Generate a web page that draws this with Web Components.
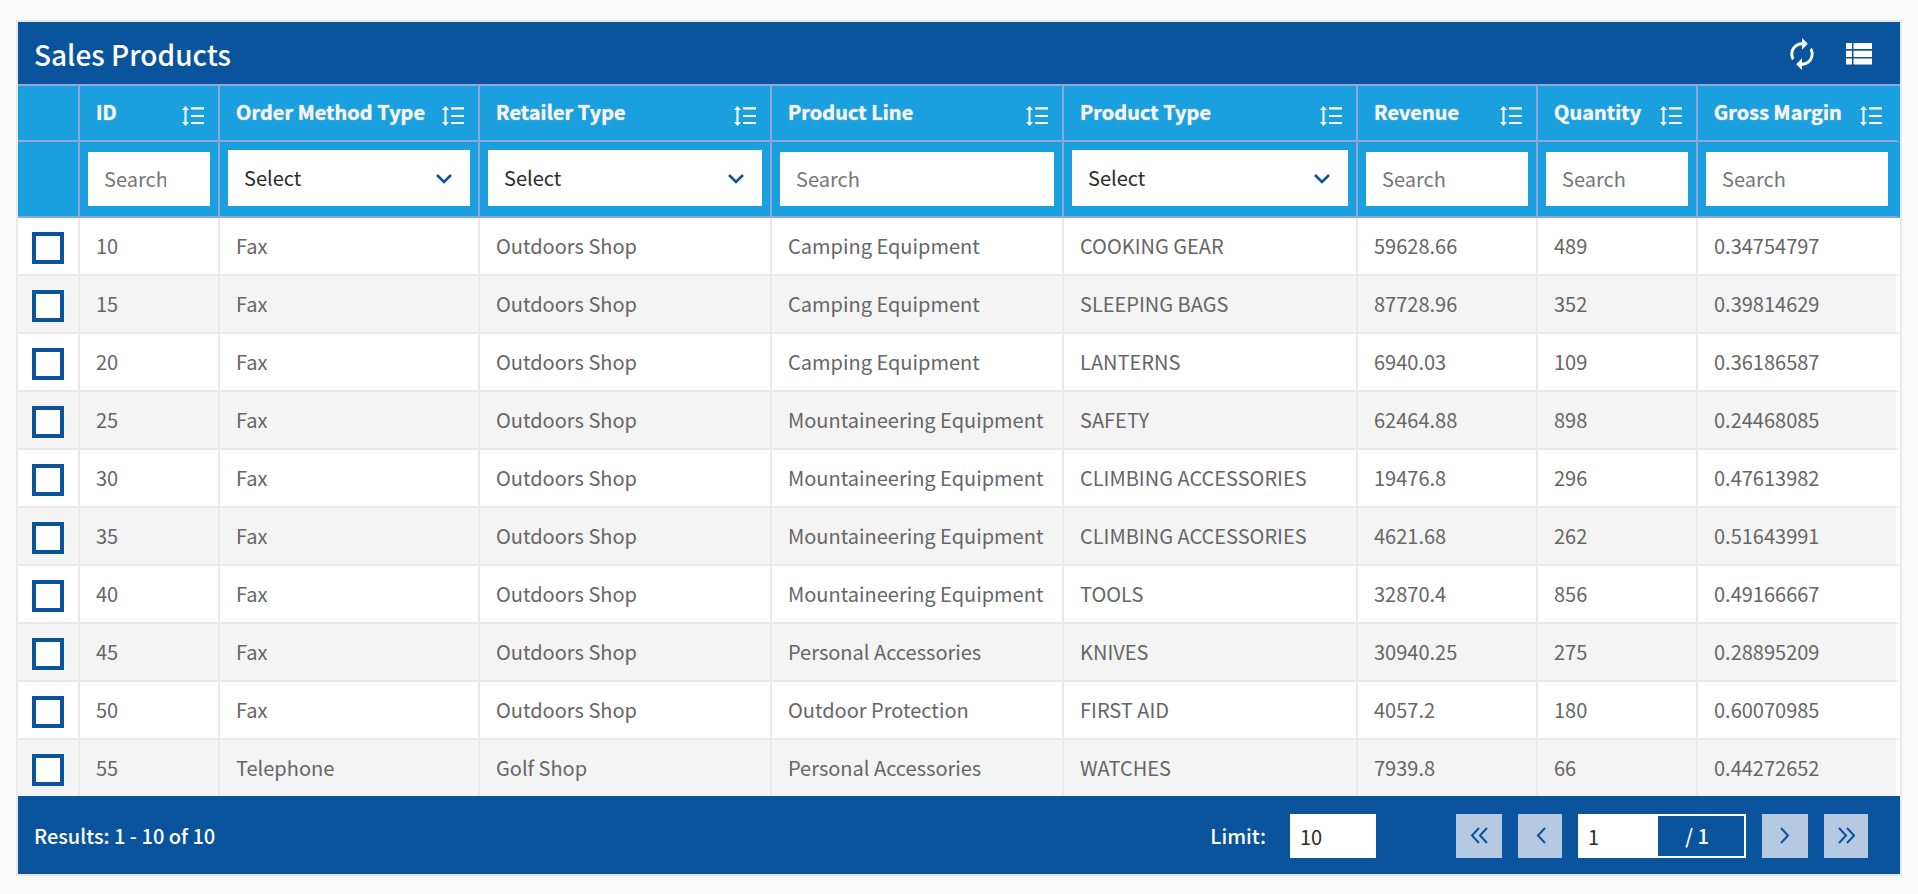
<!DOCTYPE html>
<html lang="en">
<head>
<meta charset="utf-8">
<meta name="viewport" content="width=device-width, initial-scale=1">
<title>Sales Products</title>
<style>
  :root {
    --brand: #0a549e;
    --accent: #1ba0df;
    --head-line: #8ea6dc;
    --line: #e9e9e9;
    --stripe: #f4f4f4;
    --text: #666;
    --ink: #2b2b2b;
  }
  body {
    margin: 0;
    padding: 20px 16px 18px;
    background: #fafafa;
    color: var(--text);
    font: 20px/32px "Noto Sans CJK SC", "Noto Sans", sans-serif;
  }
</style>
</head>
<body>
<data-grid heading="Sales Products"></data-grid>

<script>
const COLUMNS = [
  { label: 'ID', width: 140, filter: 'search' },
  { label: 'Order Method Type', width: 260, filter: 'select' },
  { label: 'Retailer Type', width: 292, filter: 'select' },
  { label: 'Product Line', width: 292, filter: 'search' },
  { label: 'Product Type', width: 294, filter: 'select' },
  { label: 'Revenue', width: 180, filter: 'search' },
  { label: 'Quantity', width: 160, filter: 'search' },
  { label: 'Gross Margin', width: 202, filter: 'search' }
];
const ROWS = [
  ['10', 'Fax', 'Outdoors Shop', 'Camping Equipment', 'COOKING GEAR', '59628.66', '489', '0.34754797'],
  ['15', 'Fax', 'Outdoors Shop', 'Camping Equipment', 'SLEEPING BAGS', '87728.96', '352', '0.39814629'],
  ['20', 'Fax', 'Outdoors Shop', 'Camping Equipment', 'LANTERNS', '6940.03', '109', '0.36186587'],
  ['25', 'Fax', 'Outdoors Shop', 'Mountaineering Equipment', 'SAFETY', '62464.88', '898', '0.24468085'],
  ['30', 'Fax', 'Outdoors Shop', 'Mountaineering Equipment', 'CLIMBING ACCESSORIES', '19476.8', '296', '0.47613982'],
  ['35', 'Fax', 'Outdoors Shop', 'Mountaineering Equipment', 'CLIMBING ACCESSORIES', '4621.68', '262', '0.51643991'],
  ['40', 'Fax', 'Outdoors Shop', 'Mountaineering Equipment', 'TOOLS', '32870.4', '856', '0.49166667'],
  ['45', 'Fax', 'Outdoors Shop', 'Personal Accessories', 'KNIVES', '30940.25', '275', '0.28895209'],
  ['50', 'Fax', 'Outdoors Shop', 'Outdoor Protection', 'FIRST AID', '4057.2', '180', '0.60070985'],
  ['55', 'Telephone', 'Golf Shop', 'Personal Accessories', 'WATCHES', '7939.8', '66', '0.44272652']
];

class ShadowElement extends HTMLElement {
  constructor() {
    super();
    this.attachShadow({ mode: 'open' });
  }
  connectedCallback() {
    this.shadowRoot.innerHTML = this.render();
  }
}

/* Plain icon button: the glyph is slotted in. */
customElements.define('icon-button', class extends ShadowElement {
  render() {
    return `<style>
      :host { display: block; }
      button { display: block; margin: 0; padding: 0; border: 0; background: none; color: inherit; cursor: pointer; }
    </style>
    <button type="button" aria-label="${this.getAttribute('label')}"><slot></slot></button>`;
  }
});

/* Column title with its sort button. */
customElements.define('column-title', class extends ShadowElement {
  render() {
    return `<style>
      :host { display: flex; justify-content: space-between; align-items: flex-start; padding: 10px 14px 12px 16px; white-space: nowrap; text-shadow: 0 0 1px #f4f4f4; }
      button { display: block; margin: 10px 0 0; padding: 0; border: 0; background: none; color: #fff; cursor: pointer; }
      svg { display: block; }
    </style>
    <span><slot></slot></span>
    <button type="button" aria-label="Sort">
      <svg width="22" height="20" viewBox="0 0 22 20" fill="currentColor">
        <path d="M3.500 0 7 4H4.500v12H7L3.500 20 0 16h2.500V4H0z"/>
        <path d="M9 1.200h13v2.200H9zM9 9h13v2.100H9zM9 16h13v2.100H9z"/>
      </svg>
    </button>`;
  }
});

customElements.define('filter-search', class extends ShadowElement {
  render() {
    return `<style>
      :host { display: block; }
      input { box-sizing: border-box; display: block; width: 100%; height: 54px; margin: 0; padding: 0 44px 2px 16px; border: 0; border-radius: 0; background: #fff; color: var(--ink); font: inherit; outline: 0; }
      input::placeholder { color: #777; opacity: 1; }
    </style>
    <input type="text" placeholder="Search" aria-label="${this.getAttribute('label')}">`;
  }
});

customElements.define('filter-select', class extends ShadowElement {
  render() {
    return `<style>
      :host { display: grid; align-items: center; }
      select, svg { grid-area: 1 / 1; }
      select { appearance: none; box-sizing: border-box; width: 100%; height: 56px; margin: 0; padding: 0 44px 0 16px; border: 0; border-radius: 0; background: #fff; color: var(--ink); font: inherit; outline: 0; }
      svg { justify-self: end; margin-right: 18px; color: var(--brand); pointer-events: none; }
    </style>
    <select aria-label="${this.getAttribute('label')}"><option>Select</option></select>
    <svg width="16" height="12" viewBox="0 0 16 12" fill="none" stroke="currentColor" stroke-width="2.600"><path d="M1 3l7 7 7-7"/></svg>`;
  }
});

customElements.define('row-check', class extends ShadowElement {
  render() {
    return `<style>
      :host { display: block; padding: 14px 0 10px 14px; }
      input { appearance: none; box-sizing: border-box; display: block; width: 32px; height: 32px; margin: 0; border: 4px solid var(--brand); background: #fff; }
      input:checked { background: var(--brand); }
    </style>
    <input type="checkbox" aria-label="${this.getAttribute('label')}">`;
  }
});

customElements.define('grid-toolbar', class extends ShadowElement {
  render() {
    return `<style>
      :host { display: flex; align-items: center; justify-content: space-between; box-sizing: border-box; height: 62px; padding: 2px 28px 0 16px; background: var(--brand); color: #fff; }
      h1 { margin: 0; font-size: 28px; line-height: 40px; font-weight: 500; }
      div { display: flex; align-items: center; gap: 30px; }
      svg { display: block; }
    </style>
    <h1><slot></slot></h1>
    <div>
      <icon-button label="Refresh">
        <svg width="28" height="32" viewBox="2.500 1 19 22" fill="currentColor"><path d="M12 6v3l4-4-4-4v3c-4.420 0-8 3.580-8 8 0 1.570.46 3.030 1.240 4.260L6.700 14.800c-.45-.83-.7-1.790-.7-2.800 0-3.310 2.690-6 6-6zm6.760 1.740L17.300 9.200c.44.84.7 1.790.7 2.800 0 3.310-2.690 6-6 6v-3l-4 4 4 4v-3c4.420 0 8-3.580 8-8 0-1.570-.46-3.030-1.240-4.260z"/></svg>
      </icon-button>
      <icon-button label="Columns">
        <svg width="26" height="22" viewBox="0 0 26 22" fill="currentColor"><path d="M0 0h6v6H0zM7.500 0H26v6H7.500zM0 7.800h6V14H0zM7.500 7.800H26V14H7.500zM0 15.400h6v6.200H0zM7.500 15.400H26v6.200H7.500z"/></svg>
      </icon-button>
    </div>`;
  }
});

customElements.define('page-button', class extends ShadowElement {
  render() {
    const paths = {
      first: 'M9 1L2 8.500 9 16M17 1l-7 7.500L17 16',
      prev: 'M14 1L7 8.500 14 16',
      next: 'M5 1l7 7.500L5 16',
      last: 'M2 1l7 7.500L2 16M10 1l7 7.500L10 16'
    };
    const kind = this.getAttribute('kind');
    return `<style>
      :host { display: block; width: 44px; }
      :host([kind=first]), :host([kind=next]) { width: 46px; }
      button { display: flex; align-items: center; justify-content: center; width: 100%; height: 44px; margin: 0; padding: 0; border: 0; background: #b5cae0; color: var(--brand); cursor: pointer; }
    </style>
    <button type="button" aria-label="${kind} page">
      <svg width="18" height="18" viewBox="0 0 18 18" fill="none" stroke="currentColor" stroke-width="2"><path d="${paths[kind]}"/></svg>
    </button>`;
  }
});

customElements.define('grid-pager', class extends ShadowElement {
  render() {
    return `<style>
      :host { display: flex; align-items: center; justify-content: space-between; box-sizing: border-box; height: 78px; padding: 2px 32px 0 16px; background: var(--brand); color: #fff; font-weight: 500; }
      div { display: flex; align-items: center; }
      .limit { gap: 24px; margin-right: 80px; }
      .pages { gap: 16px; }
      input { box-sizing: border-box; height: 44px; margin: 0; padding: 0 10px; border: 0; border-radius: 0; background: #fff; color: var(--ink); font: inherit; font-weight: 400; outline: 0; }
      .limit input { width: 86px; }
      .page { box-sizing: border-box; width: 168px; height: 44px; border: 2px solid #fff; }
      .page input { width: 78px; height: 40px; padding: 0 8px; }
      .page span { flex: 1; padding-right: 8px; text-align: center; }
    </style>
    <span>Results: 1 - 10 of 10</span>
    <div>
      <div class="limit"><label for="limit">Limit:</label><input id="limit" type="text" value="10"></div>
      <div class="pages">
        <page-button kind="first"></page-button>
        <page-button kind="prev"></page-button>
        <div class="page"><input type="text" value="1" aria-label="Page"><span>/ 1</span></div>
        <page-button kind="next"></page-button>
        <page-button kind="last"></page-button>
      </div>
    </div>`;
  }
});

customElements.define('data-grid', class extends ShadowElement {
  render() {
    return `<style>
      :host { display: block; border: 2px solid var(--line); background: #fff; }
      .scroll { overflow-x: auto; }
      table { table-layout: fixed; width: 100%; min-width: 1280px; border-spacing: 0; border-top: 2px solid var(--head-line); }
      th, td { padding: 0; text-align: left; border: 0 solid var(--line); border-right-width: 2px; border-bottom-width: 2px; }
      th { background: var(--accent); border-color: var(--head-line); color: #f4f4f4; font-weight: 700; }
      .filters th { height: 74px; box-sizing: content-box; vertical-align: bottom; font-weight: 400; }
      .filters filter-search, .filters filter-select { margin: 0 8px 10px; }
      td { white-space: nowrap; }
      td.text { padding: 12px 0 12px 16px; overflow: hidden; text-overflow: ellipsis; }
      tbody tr:nth-child(even) { background: var(--stripe); }
      tbody tr:last-child td { border-bottom-width: 0; }
      th:last-child { border-right: 4px solid var(--accent); }
      td:last-child { border-right: 4px solid #fff; }
    </style>
    <grid-toolbar>${this.getAttribute('heading')}</grid-toolbar>
    <div class="scroll">
      <table>
        <colgroup><col style="width:62px">${COLUMNS.map(c => `<col style="width:${c.width}px">`).join('')}</colgroup>
        <thead>
          <tr><th></th>${COLUMNS.map(c => `<th scope="col"><column-title>${c.label}</column-title></th>`).join('')}</tr>
          <tr class="filters"><th></th>${COLUMNS.map(c => `<th><filter-${c.filter} label="Filter by ${c.label}"></filter-${c.filter}></th>`).join('')}</tr>
        </thead>
        <tbody>${ROWS.map(r => `<tr><td><row-check label="Row ${r[0]}"></row-check></td>${r.map(v => `<td class="text">${v}</td>`).join('')}</tr>`).join('')}</tbody>
      </table>
    </div>
    <grid-pager></grid-pager>`;
  }
});
</script>
</body>
</html>
